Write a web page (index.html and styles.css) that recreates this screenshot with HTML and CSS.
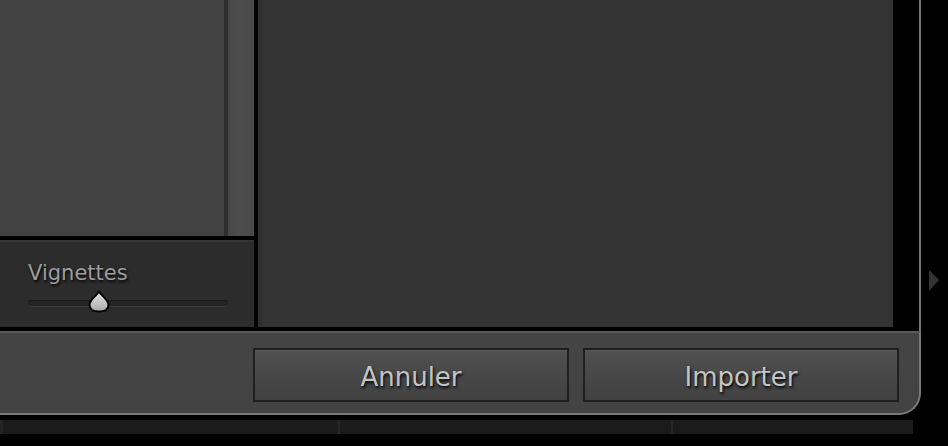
FILE: index.html
```html
<!DOCTYPE html>
<html lang="fr">

<head>
    <meta charset="UTF-8">
    <meta name="viewport" content="width=device-width, initial-scale=1.0">
    <link rel="stylesheet" href="styles.css">
    <title>Importer</title>
</head>

<body>

    <div class="screen">
        <div class="dialog">
            <div class="main">
                <div class="leftCol">
                    <div class="preview">
                        <div class="previewArea"></div>
                        <div class="scrollEdge"></div>
                        <div class="scrollBar"></div>
                    </div>
                    <div class="thumbSize">
                        <div class="label">Vignettes</div>
                        <div class="slider">
                            <div class="track"></div>
                            <svg class="knob" width="24" height="23" viewBox="0 0 24 23">
                                <defs>
                                    <linearGradient id="knobFill" x1="0" y1="0" x2="0" y2="1">
                                        <stop offset="0" stop-color="#e6e6e6" />
                                        <stop offset="1" stop-color="#a9a9a9" />
                                    </linearGradient>
                                </defs>
                                <path d="M12 1.5 C14.5 6 21.5 9.5 21.5 15 C21.5 19.5 17.5 21.5 12 21.5 C6.5 21.5 2.5 19.5 2.5 15 C2.5 9.5 9.5 6 12 1.5 Z" fill="url(#knobFill)" stroke="#000" stroke-width="2" stroke-linejoin="round" />
                            </svg>
                        </div>
                    </div>
                </div>
                <div class="center"></div>
            </div>
            <div class="footer">
                <div class="btn">Annuler</div>
                <div class="btn">Importer</div>
            </div>
        </div>
        <div class="side">
            <span class="arrow"></span>
        </div>
    </div>

    <div class="strip">
        <span class="cell cellFirst"></span>
        <span class="cell cellMid"></span>
        <span class="cell cellLast"></span>
    </div>

</body>

</html>
```

FILE: styles.css
```css
* {
    margin: 0;
    padding: 0;
    box-sizing: border-box;
}

body {
    width: 948px;
    height: 446px;
    background-color: #000;
    font-family: "DejaVu Sans", "Liberation Sans", sans-serif;
    overflow: hidden;
}

.screen {
    display: flex;
}

.dialog {
    width: 921px;
    height: 415px;
    display: flex;
    flex-direction: column;
}

.main {
    height: 331px;
    display: flex;
    border-right: 2px solid #747474;
    padding-bottom: 4px;
}

.leftCol {
    width: 254px;
    display: flex;
    flex-direction: column;
}

.preview {
    height: 236px;
    display: flex;
}

.previewArea {
    width: 224px;
    background-color: #424242;
}

.scrollEdge {
    width: 4px;
    background-color: #2e2e2e;
}

.scrollBar {
    flex: 1;
    background: linear-gradient(to right, #474747, #4d4d4d 40%, #4a4a4a);
}

.thumbSize {
    flex: 1;
    margin-top: 4px;
    background-color: #2c2c2c;
    border-top: 2px solid #353535;
    padding: 19px 26px 0 28px;
}

.label {
    font-size: 21px;
    line-height: 25px;
    color: #9c9c9c;
    text-shadow: 1px 2px 3px #000;
}

.slider {
    position: relative;
    height: 24px;
    margin-top: 5px;
    display: flex;
    align-items: center;
}

.track {
    width: 100%;
    height: 6px;
    border-radius: 3px;
    background-color: #242424;
    box-shadow: 0 1px 0 #3c3c3c, inset 0 1px 1px #1a1a1a;
}

.knob {
    position: absolute;
    left: 59px;
    top: -1px;
}

.center {
    width: 635px;
    margin-left: 4px;
    background-color: #333333;
    border-left: 4px solid #2f2f2f;
}

.footer {
    flex: 1;
    display: flex;
    justify-content: flex-end;
    gap: 14px;
    padding: 15px 20px 0 0;
    background: linear-gradient(to bottom, #444444, #434343);
    border-top: 2px solid #595959;
    border-right: 2px solid #7a7a7a;
    border-bottom: 2px solid #7a7a7a;
    border-bottom-right-radius: 22px;
}

.btn {
    width: 316px;
    height: 54px;
    border: 2px solid #1f1f1f;
    background: linear-gradient(to bottom, #515151, #474747 55%, #424242);
    box-shadow: inset 0 1px 0 #5a5a5a;
    color: #c4c4c4;
    font-size: 26px;
    line-height: 55px;
    text-align: center;
    text-shadow: 1px 2px 3px #000;
}

.side {
    flex: 1;
    padding: 270px 0 0 8px;
}

.arrow {
    display: block;
    width: 0;
    height: 0;
    border-left: 10px solid #333;
    border-top: 10px solid transparent;
    border-bottom: 11px solid transparent;
}

.strip {
    width: 913px;
    height: 14px;
    margin-top: 5px;
    display: flex;
    background-color: #1b1b1b;
}

.cell {
    display: block;
    height: 100%;
}

.cellFirst {
    width: 338px;
    border-left: 3px solid #242424;
}

.cellMid {
    width: 333px;
    border-left: 2px solid #262626;
}

.cellLast {
    flex: 1;
    border-left: 2px solid #262626;
}
```
